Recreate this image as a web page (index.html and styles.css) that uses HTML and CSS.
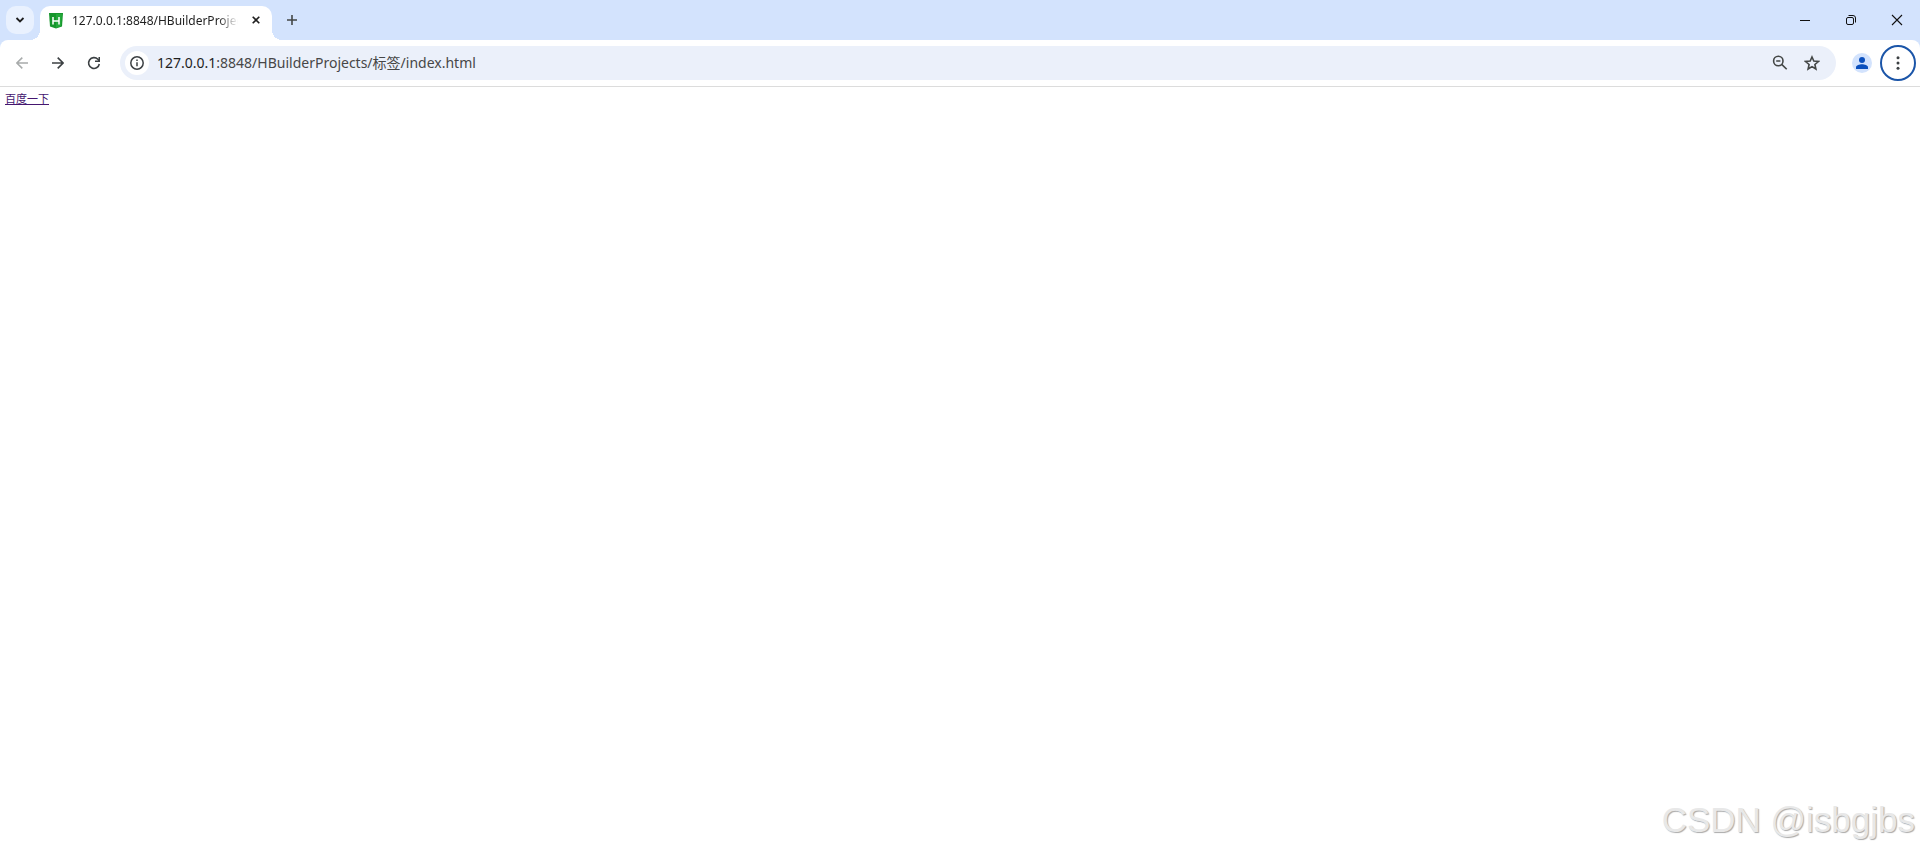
FILE: index.html
```html
<!DOCTYPE html>
<html lang="zh-CN">
<head>
<meta charset="utf-8">
<title>127.0.0.1:8848/HBuilderProjects</title>
<link rel="stylesheet" href="styles.css">
</head>
<body>
<header>
  <div class="tabstrip">
    <button class="tab-search" aria-label="Search tabs"><svg width="10" height="8" viewBox="0 0 10 8"><path d="M1.500 2 5 5.500 8.500 2" fill="none" stroke="#1f1f1f" stroke-width="1.800"/></svg></button>
    <div class="tab">
      <svg class="favicon" width="14" height="16" viewBox="0 0 14 16"><path d="M0 0h14l-1 13.500-6 2-6-2z" fill="#16962c"/><path d="M7 1h6l-1 12-5 2z" fill="#23a83a"/><path d="M4 4v7.500M10 4v7.500M4 8h6" fill="none" stroke="#fff" stroke-width="1.500"/></svg>
      <span class="tab-title">127.0.0.1:8848/HBuilderProjects</span>
      <button class="tab-close" aria-label="Close tab"><svg width="8" height="8" viewBox="0 0 8 8"><path d="M.7.7l6.600 6.600M7.300.7.7 7.300" stroke="#1f1f1f" stroke-width="1.600"/></svg></button>
    </div>
    <button class="new-tab" aria-label="New tab"><svg width="10" height="10" viewBox="0 0 10 10"><path d="M5 0v10M0 5h10" stroke="#444746" stroke-width="1.600"/></svg></button>
    <div class="window-controls">
      <button aria-label="Minimize"><svg width="12" height="12" viewBox="0 0 12 12"><path d="M1 6.500h10" stroke="#111"/></svg></button>
      <button aria-label="Restore"><svg width="12" height="12" viewBox="0 0 12 12" fill="none" stroke="#111"><rect x="1.500" y="3.500" width="7" height="7" rx="1.500"/><path d="M3.500 1.500h4.500a2.500 2.500 0 0 1 2.500 2.500v4.500"/></svg></button>
      <button aria-label="Close"><svg width="12" height="12" viewBox="0 0 12 12"><path d="M1 1l10 10M11 1 1 11" stroke="#111" stroke-width="1.100"/></svg></button>
    </div>
  </div>
  <div class="toolbar">
    <button class="nav" aria-label="Back"><svg width="12" height="12" viewBox="0 0 12 12" fill="none" stroke="#a8abab" stroke-width="1.500"><path d="M12 6H1M6.300.6.9 6l5.400 5.400"/></svg></button>
    <button class="nav" aria-label="Forward"><svg width="12" height="12" viewBox="0 0 12 12" fill="none" stroke="#3c4043" stroke-width="1.600"><path d="M0 6h11M5.700.6 11.100 6l-5.400 5.400"/></svg></button>
    <button class="nav" aria-label="Reload"><svg width="14" height="14" viewBox="0 0 14 14"><path d="M12.300 8A5.400 5.400 0 1 1 10.900 3.300L12.500 5" fill="none" stroke="#3c4043" stroke-width="1.600"/><path d="M13 1v5H8V4.600h3.500V1z" fill="#3c4043"/></svg></button>
    <div class="omnibox">
      <button class="site-info" aria-label="Site information"><svg width="14" height="14" viewBox="0 0 14 14"><circle cx="7" cy="7" r="6.200" fill="none" stroke="#3c4043" stroke-width="1.500"/><path d="M7 6.200v4M7 3.500v1.500" stroke="#3c4043" stroke-width="1.500"/></svg></button>
      <a class="url" href="#"><span class="host">127.0.0.1</span>:8848/HBuilderProjects/标签/index.html</a>
      <button class="action" aria-label="Zoom"><svg width="16" height="16" viewBox="0 0 16 16" fill="none" stroke="#444746" stroke-width="1.600"><circle cx="6.300" cy="6" r="4.700"/><path d="M9.700 9.400l5 4.900M4.200 6h4.200"/></svg></button>
      <button class="action" aria-label="Bookmark"><svg width="16" height="16" viewBox="0 0 16 16"><path d="M8 2l1.800 4.100 4.600.4-3.500 3 1 4.500L8 11.600 4.100 14l1-4.500-3.500-3 4.600-.4z" fill="none" stroke="#444746" stroke-width="1.600"/></svg></button>
    </div>
    <button class="profile" aria-label="Profile"><svg width="12" height="12" viewBox="0 0 12 12" fill="#0b50bd"><circle cx="6" cy="3" r="3"/><path d="M0 12v-1.700C0 8.300 3.500 7.300 6 7.300s6 1 6 3V12z"/></svg></button>
    <button class="menu" aria-label="Menu"><svg width="4" height="14" viewBox="0 0 4 14" fill="#3c4043"><circle cx="2" cy="1.700" r="1.500"/><circle cx="2" cy="7" r="1.500"/><circle cx="2" cy="12.300" r="1.500"/></svg></button>
  </div>
</header>
<main><a class="link" href="#">百度一下</a></main>
<div class="watermark">CSDN @isbgjbs</div>
</body>
</html>
```
FILE: styles.css
```css
* { box-sizing: border-box; }
body { margin: 0; min-height: 100vh; display: flex; flex-direction: column; background: #fff; font-family: "Noto Sans", "Noto Sans CJK SC", sans-serif; }
button { display: flex; align-items: center; justify-content: center; flex: none; padding: 0; border: 0; background: none; }
svg { display: block; flex: none; }
header { background: #d3e3fd; }
.tabstrip { display: flex; align-items: flex-end; height: 40px; padding-left: 6px; }
.tab-search { width: 28px; height: 28px; margin: 0 6px 6px 0; border-radius: 10px; background: #e9f1fe; }
.tab { position: relative; display: flex; align-items: center; width: 232px; height: 34px; padding: 0 8px 0 9px; border-radius: 10px 10px 0 0; background: #fff; }
.tab::before, .tab::after { content: ""; position: absolute; bottom: 0; width: 10px; height: 10px; }
.tab::before { right: 100%; background: radial-gradient(circle at 0 0, transparent 10px, #fff 10px); }
.tab::after { left: 100%; background: radial-gradient(circle at 100% 0, transparent 10px, #fff 10px); }
.favicon { margin: 0 9px 5px 0; }
.tab-title { flex: 1; min-width: 0; margin: 0 10px 4px 0; overflow: hidden; white-space: nowrap; font-size: 12px; line-height: 18px; color: #1f1f1f; mask-image: linear-gradient(to right, #000 calc(100% - 20px), transparent); }
.tab-close { width: 16px; height: 16px; margin-bottom: 6px; }
.new-tab { width: 28px; height: 28px; margin: 0 0 6px 6px; }
.window-controls { display: flex; align-self: stretch; margin-left: auto; }
.window-controls button { width: 46px; height: 40px; }
.toolbar { display: flex; align-items: center; height: 47px; padding: 0 4px; border-bottom: 1px solid #dcdcdc; border-radius: 8px 8px 0 0; background: #fff; }
.nav { width: 36px; height: 34px; }
.omnibox { display: flex; flex: 1; align-items: center; min-width: 0; height: 34px; margin-left: 8px; padding: 0 8px 0 5px; border-radius: 17px; background: #ebf0fa; }
.site-info { width: 24px; height: 24px; border-radius: 50%; background: #fff; }
.url { flex: 1; min-width: 0; margin-left: 8px; overflow: hidden; white-space: nowrap; font-size: 14px; line-height: 24px; color: #474747; text-decoration: none; }
.host { color: #1f1f1f; }
.action { width: 32px; height: 32px; }
.profile { width: 20px; height: 20px; margin: 0 8px 0 16px; border-radius: 50%; background: #d3e3fd; }
.menu { width: 36px; height: 36px; border: 2px solid #1b55a8; border-radius: 50%; }
main { flex: 1; padding: 4px 5px; font-size: 11px; line-height: 16px; }
.link { display: block; width: max-content; color: #45166f; }
.watermark { align-self: flex-end; padding: 0 5px 14px 0; font-family: "Liberation Sans", sans-serif; font-size: 35px; line-height: 40px; color: #e8e8e8; text-shadow: 1px 1px 1px #aaa; }
```
